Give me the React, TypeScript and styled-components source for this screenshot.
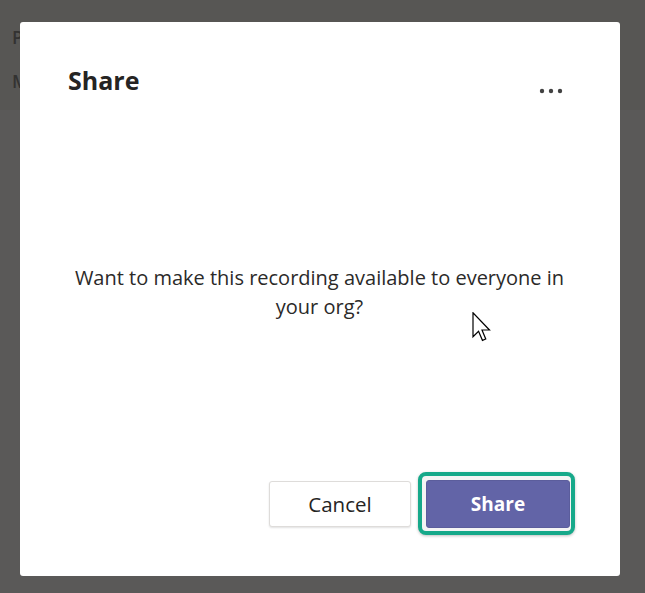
import React from "react";
import styled, { createGlobalStyle } from "styled-components";

const Global = createGlobalStyle`
  html, body { margin: 0; padding: 0; }
  body {
    width: 645px;
    height: 593px;
    overflow: hidden;
    background: #5a5958;
    font-family: "Open Sans", "Noto Sans", "Liberation Sans", sans-serif;
  }
`;

const Page = styled.div`
  position: relative;
  width: 645px;
  height: 593px;
  display: flex;
  flex-direction: column;
  background: #5a5958;
`;

const PageHeader = styled.header`
  height: 110px;
  box-sizing: border-box;
  padding: 24px 0 0 12px;
  background: #575654;
  display: flex;
  flex-direction: column;
  gap: 18px;
`;

const PageLine = styled.div`
  font-size: 18px;
  line-height: 26px;
  font-weight: 600;
  color: #333231;
  white-space: nowrap;
`;

const Dialog = styled.section`
  position: absolute;
  left: 20px;
  top: 22px;
  width: 600px;
  height: 554px;
  box-sizing: border-box;
  padding: 40px 45px 41px 47px;
  background: #ffffff;
  border-radius: 3px;
  display: flex;
  flex-direction: column;
  color: #252423;
`;

const Header = styled.div`
  display: flex;
  justify-content: space-between;
  height: 36px;
`;

const Title = styled.h2`
  margin: 0;
  padding-left: 1px;
  font-size: 25px;
  line-height: 36px;
  font-weight: 700;
  color: #252423;
`;

const MoreButton = styled.button`
  align-self: flex-end;
  width: 32px;
  height: 14px;
  margin-right: 8px;
  padding: 0;
  border: none;
  background: transparent;
  display: flex;
  align-items: center;
  justify-content: center;
  color: #424242;
`;

const Body = styled.div`
  flex: 1;
  display: flex;
  align-items: center;
  justify-content: center;
  padding: 13px 3px 0 0;
`;

const Message = styled.p`
  margin: 0;
  max-width: 504px;
  text-align: center;
  font-size: 20px;
  line-height: 29px;
  color: #2b2a29;
`;

const Footer = styled.div`
  display: flex;
  justify-content: flex-end;
  align-items: center;
  gap: 7px;
`;

const Button = styled.button<{ $primary?: boolean }>`
  box-sizing: border-box;
  width: ${(p) => (p.$primary ? 144 : 142)}px;
  height: ${(p) => (p.$primary ? 48 : 46)}px;
  border-radius: 3px;
  font-family: inherit;
  font-size: ${(p) => (p.$primary ? 19 : 20.5)}px;
  font-weight: ${(p) => (p.$primary ? 700 : 400)};
  cursor: pointer;
  border: 1px solid ${(p) => (p.$primary ? "#5b5d9c" : "#dedcda")};
  background: ${(p) => (p.$primary ? "#6264a7" : "#ffffff")};
  color: ${(p) => (p.$primary ? "#ffffff" : "#252423")};
  box-shadow: ${(p) =>
    p.$primary ? "none" : "0 1px 2px rgba(0, 0, 0, 0.12)"};
`;

const FocusRing = styled.div`
  display: flex;
  padding: 4px 1px 3px 4px;
  border: 4px solid #16a98a;
  border-radius: 8px;
  background: #f4f4f4;
  box-shadow: 0 1px 3px rgba(0, 0, 0, 0.25);
`;

const Cursor = styled.svg`
  position: absolute;
  left: 472px;
  top: 312px;
`;

export default function App() {
  return (
    <>
      <Global />
      <Page>
        <PageHeader>
          <PageLine>P</PageLine>
          <PageLine>M</PageLine>
        </PageHeader>
        <Dialog role="dialog" aria-label="Share">
          <Header>
            <Title>Share</Title>
            <MoreButton aria-label="More options">
              <svg width="24" height="6" viewBox="0 0 24 6">
                <circle cx="3" cy="3" r="2.2" fill="currentColor" />
                <circle cx="12" cy="3" r="2.2" fill="currentColor" />
                <circle cx="21" cy="3" r="2.2" fill="currentColor" />
              </svg>
            </MoreButton>
          </Header>
          <Body>
            <Message>
              Want to make this recording available to everyone in your org?
            </Message>
          </Body>
          <Footer>
            <Button>Cancel</Button>
            <FocusRing>
              <Button $primary>Share</Button>
            </FocusRing>
          </Footer>
        </Dialog>
        <Cursor width="20" height="30" viewBox="0 0 13 20">
          <path
            d="M0.5 0.5 L0.5 16.5 L4.2 12.9 L6.8 18.9 L9 18 L6.5 12 L11.5 12 Z"
            fill="#ffffff"
            stroke="#000000"
            strokeWidth="0.8"
            strokeLinejoin="miter"
          />
        </Cursor>
      </Page>
    </>
  );
}
